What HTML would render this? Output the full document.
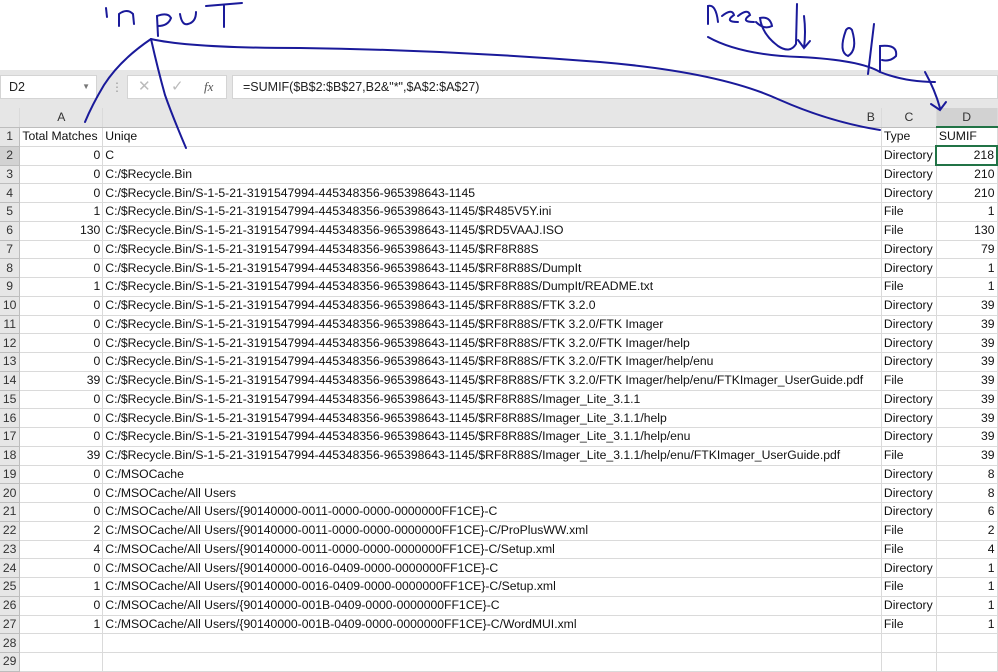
<!DOCTYPE html>
<html><head><meta charset="utf-8"><style>
*{margin:0;padding:0;box-sizing:border-box}
body{width:998px;height:669px;overflow:hidden;background:#fff;font-family:"Liberation Sans",Arial,sans-serif;position:relative}
.bar{position:absolute;left:0;top:70px;width:998px;height:57px;background:#e6e6e6}
.box{position:absolute;background:#fff;border:1px solid #d4d4d4;height:24px;top:75px;font-size:12.5px;line-height:22px;color:#222}
table{position:absolute;left:0;top:108px;border-collapse:collapse;table-layout:fixed;font-size:12.2px;color:#111}
td{height:18.75px;border-right:1px solid #dadada;border-bottom:1px solid #dadada;padding:0 2px;white-space:nowrap;overflow:hidden;line-height:17px}
td.h{background:#e6e6e6;color:#333;text-align:center;border-color:#bdbdbd;padding:0}
tr.ch td{height:19px;background:#e6e6e6;text-align:center;color:#333;border-bottom:1px solid #bdbdbd}
.r{text-align:right}
svg{position:absolute;left:0;top:0}
</style></head><body>
<div class="bar"></div>
<div class="box" style="left:0;width:97px;padding-left:8px">D2<span style="position:absolute;right:6px;top:0;font-size:8px;color:#777">▼</span></div>
<div style="position:absolute;left:111px;top:80px;color:#999;font-size:12px">⋮</div>
<div class="box" style="left:127px;width:100px;color:#bbb;font-size:15px"><span style="position:absolute;left:10px">✕</span><span style="position:absolute;left:43px">✓</span><span style="position:absolute;left:76px;color:#555;font-style:italic;font-family:'Liberation Serif',serif;font-size:13px">fx</span></div>
<div class="box" style="left:232px;width:766px;padding-left:10px">=SUMIF($B$2:$B$27,B2&amp;"*",$A$2:$A$27)</div>
<table>
<colgroup><col style="width:20px"><col style="width:83px"><col style="width:779px"><col style="width:55px"><col style="width:61px"></colgroup>
<tr class="ch"><td style="background:#e6e6e6"></td><td>A</td><td style="text-align:right;padding-right:6px">B</td><td>C</td><td style="background:#d2d2d2;border-bottom:2px solid #217346">D</td></tr>
<tr><td class="h">1</td><td>Total Matches</td><td>Uniqe</td><td>Type</td><td>SUMIF</td></tr>
<tr><td class="h" style="background:#d2d2d2">2</td><td class="r">0</td><td>C</td><td>Directory</td><td class="r" style="border:2px solid #217346">218</td></tr>
<tr><td class="h">3</td><td class="r">0</td><td>C:/$Recycle.Bin</td><td>Directory</td><td class="r">210</td></tr>
<tr><td class="h">4</td><td class="r">0</td><td>C:/$Recycle.Bin/S-1-5-21-3191547994-445348356-965398643-1145</td><td>Directory</td><td class="r">210</td></tr>
<tr><td class="h">5</td><td class="r">1</td><td>C:/$Recycle.Bin/S-1-5-21-3191547994-445348356-965398643-1145/$R485V5Y.ini</td><td>File</td><td class="r">1</td></tr>
<tr><td class="h">6</td><td class="r">130</td><td>C:/$Recycle.Bin/S-1-5-21-3191547994-445348356-965398643-1145/$RD5VAAJ.ISO</td><td>File</td><td class="r">130</td></tr>
<tr><td class="h">7</td><td class="r">0</td><td>C:/$Recycle.Bin/S-1-5-21-3191547994-445348356-965398643-1145/$RF8R88S</td><td>Directory</td><td class="r">79</td></tr>
<tr><td class="h">8</td><td class="r">0</td><td>C:/$Recycle.Bin/S-1-5-21-3191547994-445348356-965398643-1145/$RF8R88S/DumpIt</td><td>Directory</td><td class="r">1</td></tr>
<tr><td class="h">9</td><td class="r">1</td><td>C:/$Recycle.Bin/S-1-5-21-3191547994-445348356-965398643-1145/$RF8R88S/DumpIt/README.txt</td><td>File</td><td class="r">1</td></tr>
<tr><td class="h">10</td><td class="r">0</td><td>C:/$Recycle.Bin/S-1-5-21-3191547994-445348356-965398643-1145/$RF8R88S/FTK 3.2.0</td><td>Directory</td><td class="r">39</td></tr>
<tr><td class="h">11</td><td class="r">0</td><td>C:/$Recycle.Bin/S-1-5-21-3191547994-445348356-965398643-1145/$RF8R88S/FTK 3.2.0/FTK Imager</td><td>Directory</td><td class="r">39</td></tr>
<tr><td class="h">12</td><td class="r">0</td><td>C:/$Recycle.Bin/S-1-5-21-3191547994-445348356-965398643-1145/$RF8R88S/FTK 3.2.0/FTK Imager/help</td><td>Directory</td><td class="r">39</td></tr>
<tr><td class="h">13</td><td class="r">0</td><td>C:/$Recycle.Bin/S-1-5-21-3191547994-445348356-965398643-1145/$RF8R88S/FTK 3.2.0/FTK Imager/help/enu</td><td>Directory</td><td class="r">39</td></tr>
<tr><td class="h">14</td><td class="r">39</td><td>C:/$Recycle.Bin/S-1-5-21-3191547994-445348356-965398643-1145/$RF8R88S/FTK 3.2.0/FTK Imager/help/enu/FTKImager_UserGuide.pdf</td><td>File</td><td class="r">39</td></tr>
<tr><td class="h">15</td><td class="r">0</td><td>C:/$Recycle.Bin/S-1-5-21-3191547994-445348356-965398643-1145/$RF8R88S/Imager_Lite_3.1.1</td><td>Directory</td><td class="r">39</td></tr>
<tr><td class="h">16</td><td class="r">0</td><td>C:/$Recycle.Bin/S-1-5-21-3191547994-445348356-965398643-1145/$RF8R88S/Imager_Lite_3.1.1/help</td><td>Directory</td><td class="r">39</td></tr>
<tr><td class="h">17</td><td class="r">0</td><td>C:/$Recycle.Bin/S-1-5-21-3191547994-445348356-965398643-1145/$RF8R88S/Imager_Lite_3.1.1/help/enu</td><td>Directory</td><td class="r">39</td></tr>
<tr><td class="h">18</td><td class="r">39</td><td>C:/$Recycle.Bin/S-1-5-21-3191547994-445348356-965398643-1145/$RF8R88S/Imager_Lite_3.1.1/help/enu/FTKImager_UserGuide.pdf</td><td>File</td><td class="r">39</td></tr>
<tr><td class="h">19</td><td class="r">0</td><td>C:/MSOCache</td><td>Directory</td><td class="r">8</td></tr>
<tr><td class="h">20</td><td class="r">0</td><td>C:/MSOCache/All Users</td><td>Directory</td><td class="r">8</td></tr>
<tr><td class="h">21</td><td class="r">0</td><td>C:/MSOCache/All Users/{90140000-0011-0000-0000-0000000FF1CE}-C</td><td>Directory</td><td class="r">6</td></tr>
<tr><td class="h">22</td><td class="r">2</td><td>C:/MSOCache/All Users/{90140000-0011-0000-0000-0000000FF1CE}-C/ProPlusWW.xml</td><td>File</td><td class="r">2</td></tr>
<tr><td class="h">23</td><td class="r">4</td><td>C:/MSOCache/All Users/{90140000-0011-0000-0000-0000000FF1CE}-C/Setup.xml</td><td>File</td><td class="r">4</td></tr>
<tr><td class="h">24</td><td class="r">0</td><td>C:/MSOCache/All Users/{90140000-0016-0409-0000-0000000FF1CE}-C</td><td>Directory</td><td class="r">1</td></tr>
<tr><td class="h">25</td><td class="r">1</td><td>C:/MSOCache/All Users/{90140000-0016-0409-0000-0000000FF1CE}-C/Setup.xml</td><td>File</td><td class="r">1</td></tr>
<tr><td class="h">26</td><td class="r">0</td><td>C:/MSOCache/All Users/{90140000-001B-0409-0000-0000000FF1CE}-C</td><td>Directory</td><td class="r">1</td></tr>
<tr><td class="h">27</td><td class="r">1</td><td>C:/MSOCache/All Users/{90140000-001B-0409-0000-0000000FF1CE}-C/WordMUI.xml</td><td>File</td><td class="r">1</td></tr>
<tr><td class="h">28</td><td></td><td></td><td></td><td></td></tr>
<tr><td class="h">29</td><td></td><td></td><td></td><td></td></tr>
</table>
<svg width="998" height="669" fill="none" stroke="#1a1a9a" stroke-width="2" stroke-linecap="round">
<path d="M106 8 L107 17"/>
<path d="M119 26 L119 14 Q127 8 133 14 L134 24"/>
<path d="M158 36 L157 16 Q168 12 171 18 Q168 26 158 26"/>
<path d="M180 14 Q182 26 188 24 Q196 22 196 12"/>
<path d="M206 6 L242 3 M224 5 L224 27"/>
<path d="M151 39 Q120 60 104 85 Q92 105 85 122"/>
<path d="M151 39 Q158 70 165 95 Q172 115 186 148"/>
<path d="M151 39 Q190 48 300 48 Q450 50 600 62 Q720 72 780 100 Q830 122 880 130"/>
<path d="M708 24 L708 6 Q716 4 718 22"/>
<path d="M722 16 Q732 8 734 15 Q724 22 738 22 M738 16 Q748 8 750 15 Q740 22 754 22"/>
<path d="M756 22 Q764 30 772 26 Q770 16 760 18 Q762 34 778 46 Q790 54 796 44 L797 4"/>
<path d="M804 16 Q806 32 804 48 M798 40 L804 48 L810 41"/>
<path d="M846 30 Q838 52 848 56 Q858 50 852 30 Q849 26 846 30 Z"/>
<path d="M874 24 L868 74 M880 72 L880 46 Q898 44 896 56 Q890 62 882 60"/>
<path d="M708 37 Q740 55 800 57 Q860 60 880 72 Q905 82 935 82"/>
<path d="M925 72 Q935 90 940 108 M931 104 L940 110 L946 102"/>
</svg>
</body></html>
